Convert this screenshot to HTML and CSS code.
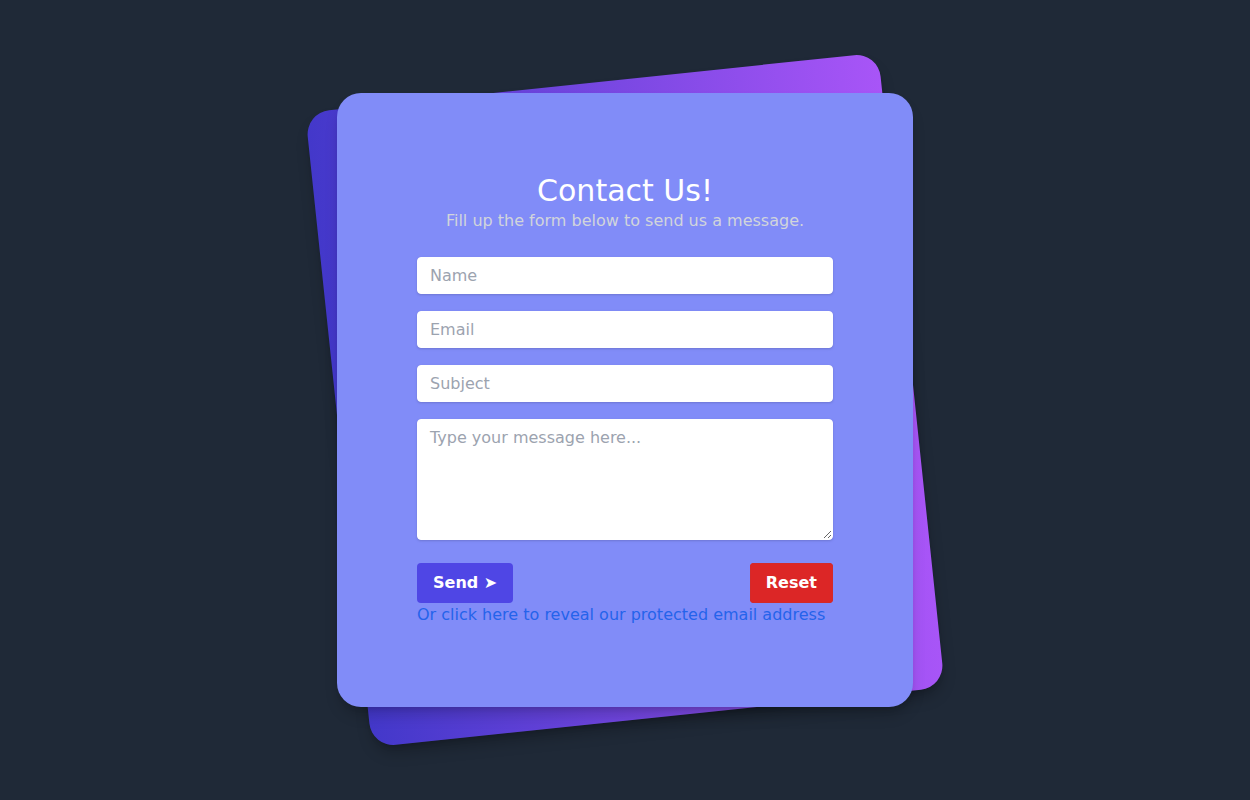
FILE: index.html
```html
<!DOCTYPE html>
<html lang="en">
<head>
    <meta charset="UTF-8">
    <meta name="viewport" content="width=device-width, initial-scale=1.0">
    <title>Contact Us</title>
    <link rel="stylesheet" href="styles.css">
</head>
<body>

<div class="stack">
    <div class="stack-back"></div>
    <section class="card">
        <h1>Contact Us!</h1>
        <p class="lead">Fill up the form below to send us a message.</p>

        <form class="contact-form">
            <input type="text" placeholder="Name">
            <input type="email" placeholder="Email">
            <input type="text" placeholder="Subject">
            <textarea placeholder="Type your message here..."></textarea>

            <div class="actions">
                <button type="submit" class="btn btn-send">Send &#10148;</button>
                <button type="reset" class="btn btn-reset">Reset</button>
            </div>
        </form>
        <a href="#" class="reveal-link">Or click here to reveal our protected email address</a>
    </section>
</div>

</body>
</html>
```

FILE: styles.css
```css
html, body {
    margin: 0;
    padding: 0;
    min-height: 100vh;
}

body {
    font-family: 'DejaVu Sans', sans-serif;
    background: #1f2937;
    display: flex;
    align-items: center;
    justify-content: center;
    height: 100vh;
    overflow: hidden;
}

.stack {
    position: relative;
    width: 576px;
}

.stack-back {
    position: absolute;
    top: -12px;
    bottom: -12px;
    left: 0;
    right: 0;
    border-radius: 24px;
    background: linear-gradient(to right, #4338ca, #a855f7);
    transform: rotate(-6deg);
    box-shadow: 0 10px 15px -3px rgba(0, 0, 0, 0.25), 0 4px 6px -4px rgba(0, 0, 0, 0.2);
}

.card {
    position: relative;
    background: #818cf8;
    border-radius: 24px;
    padding: 80px;
    box-shadow: 0 10px 15px -3px rgba(0, 0, 0, 0.2), 0 4px 6px -4px rgba(0, 0, 0, 0.15);
    text-align: center;
}

.card h1 {
    margin: 0;
    font-size: 30px;
    line-height: 36px;
    font-weight: 400;
    color: #fff;
}

.lead {
    margin: 0 0 24px 0;
    font-size: 16px;
    line-height: 24px;
    color: #d1d5db;
}

.contact-form {
    display: flex;
    flex-direction: column;
    gap: 17px;
    text-align: left;
}

.contact-form input,
.contact-form textarea {
    display: block;
    width: 100%;
    box-sizing: border-box;
    margin: 0;
    padding: 8px 12px;
    font-family: inherit;
    font-size: 16px;
    line-height: 19px;
    color: #374151;
    background: #fff;
    border: 1px solid #fff;
    border-radius: 4px;
    box-shadow: 0 1px 3px rgba(0, 0, 0, 0.1), 0 1px 2px rgba(0, 0, 0, 0.06);
    outline: none;
}

.contact-form input {
    height: 37px;
}

.contact-form textarea {
    height: 121px;
}

.contact-form ::placeholder {
    color: #9ca3af;
    opacity: 1;
}

.actions {
    display: flex;
    justify-content: space-between;
    margin-top: 6px;
}

.btn {
    font-family: inherit;
    font-size: 16px;
    line-height: 24px;
    font-weight: 700;
    color: #fff;
    padding: 8px 16px;
    border: 0;
    border-radius: 4px;
    cursor: pointer;
}

.btn-send {
    background: #4f46e5;
}

.btn-reset {
    background: #dc2626;
    box-shadow: inset 0 0 0 1px #d32a2a;
}

.reveal-link {
    display: block;
    text-align: left;
    font-size: 16px;
    line-height: 24px;
    color: #2563eb;
    text-decoration: none;
}
```
